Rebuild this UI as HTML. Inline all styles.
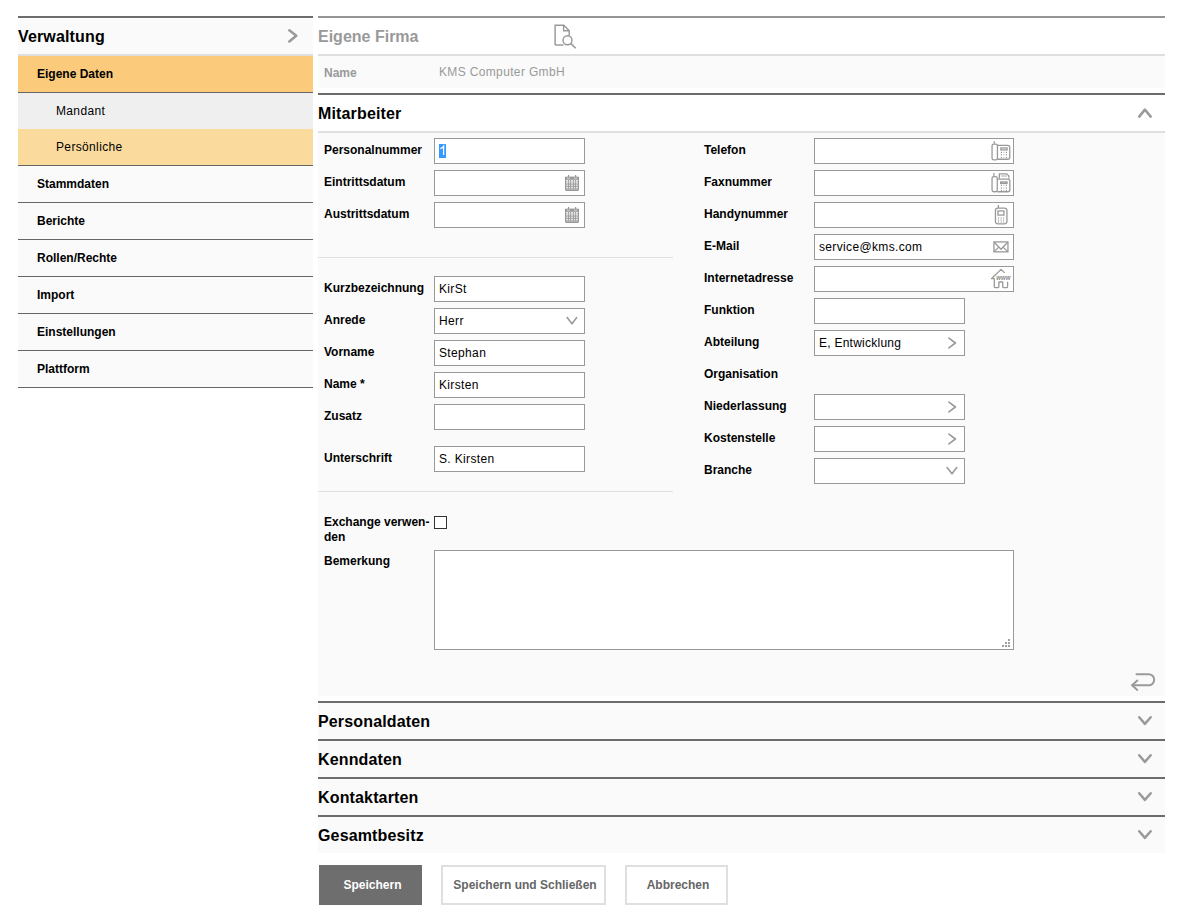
<!DOCTYPE html>
<html><head><meta charset="utf-8">
<style>
*{margin:0;padding:0;box-sizing:border-box}
html,body{width:1184px;height:917px;overflow:hidden;background:#fff}
body{font-family:"Liberation Sans",sans-serif;font-size:12px;color:#000;position:relative}
.a{position:absolute}
.t{position:absolute;white-space:nowrap;line-height:14px;letter-spacing:.35px}
.b{font-weight:bold;letter-spacing:0}
.h16{font-size:16px;font-weight:bold;line-height:18px;letter-spacing:.15px}
.sb{left:18px;width:295px}
.inp{position:absolute;background:#fff;border:1px solid #999;height:26px}
.inp span{position:absolute;left:4px;top:5px;line-height:14px;white-space:nowrap;letter-spacing:.35px}
</style></head><body>

<!-- SIDEBAR -->
<div class="a sb" style="top:16px;height:2px;background:#6c6c6c"></div>
<div class="a sb" style="top:19px;height:35px;background:#fafafa"></div>
<div class="t h16" style="left:18px;top:28px">Verwaltung</div>
<div class="a sb" style="top:54px;height:2px;background:#dfdfdf"></div>
<div class="a sb" style="top:56px;height:36px;background:#fbcb7b"></div>
<div class="a sb" style="top:92px;height:1px;background:#666"></div>
<div class="t b" style="left:37px;top:67px">Eigene Daten</div>
<div class="a sb" style="top:93px;height:36px;background:#efefef"></div>
<div class="t" style="left:56px;top:104px">Mandant</div>
<div class="a sb" style="top:129px;height:36px;background:#fbda9e"></div>
<div class="t" style="left:56px;top:140px">Persönliche</div>
<div class="a sb" style="top:165px;height:1px;background:#666"></div>

<div class="a sb" style="top:166px;height:36px;background:#fafafa"></div>
<div class="a sb" style="top:202px;height:1px;background:#666"></div>
<div class="t b" style="left:37px;top:177px">Stammdaten</div>
<div class="a sb" style="top:203px;height:36px;background:#fafafa"></div>
<div class="a sb" style="top:239px;height:1px;background:#666"></div>
<div class="t b" style="left:37px;top:214px">Berichte</div>
<div class="a sb" style="top:240px;height:36px;background:#fafafa"></div>
<div class="a sb" style="top:276px;height:1px;background:#666"></div>
<div class="t b" style="left:37px;top:251px">Rollen/Rechte</div>
<div class="a sb" style="top:277px;height:36px;background:#fafafa"></div>
<div class="a sb" style="top:313px;height:1px;background:#666"></div>
<div class="t b" style="left:37px;top:288px">Import</div>
<div class="a sb" style="top:314px;height:36px;background:#fafafa"></div>
<div class="a sb" style="top:350px;height:1px;background:#666"></div>
<div class="t b" style="left:37px;top:325px">Einstellungen</div>
<div class="a sb" style="top:351px;height:36px;background:#fafafa"></div>
<div class="a sb" style="top:387px;height:1px;background:#666"></div>
<div class="t b" style="left:37px;top:362px">Plattform</div>

<!-- MAIN -->
<div class="a" style="left:318px;top:16px;width:847px;height:2px;background:#959595"></div>
<div class="t h16" style="left:318px;top:28px;color:#999;letter-spacing:0">Eigene Firma</div>
<div class="a" style="left:318px;top:54px;width:847px;height:2px;background:#dfdfdf"></div>
<div class="a" style="left:318px;top:56px;width:847px;height:32px;background:#fafafa"></div>
<div class="t b" style="left:324px;top:66px;color:#999">Name</div>
<div class="t" style="left:439px;top:65px;color:#999">KMS Computer GmbH</div>
<div class="a" style="left:318px;top:93px;width:847px;height:2px;background:#6c6c6c"></div>
<div class="t h16" style="left:318px;top:105px">Mitarbeiter</div>
<div class="a" style="left:318px;top:131px;width:847px;height:2px;background:#dfdfdf"></div>
<div class="a" style="left:318px;top:133px;width:847px;height:563px;background:#fafafa"></div>

<div class="t b" style="left:324px;top:143px">Personalnummer</div>
<div class="inp" style="left:434px;top:138px;width:151px"><span><i style="background:#3399ff;color:transparent;font-style:normal;display:inline-block;height:14px">1</i></span></div>
<div class="t b" style="left:324px;top:175px">Eintrittsdatum</div>
<div class="inp" style="left:434px;top:170px;width:151px"></div>
<div class="t b" style="left:324px;top:207px">Austrittsdatum</div>
<div class="inp" style="left:434px;top:202px;width:151px"></div>
<div class="t b" style="left:324px;top:281px">Kurzbezeichnung</div>
<div class="inp" style="left:434px;top:276px;width:151px"><span>KirSt</span></div>
<div class="t b" style="left:324px;top:313px">Anrede</div>
<div class="inp" style="left:434px;top:308px;width:151px"><span>Herr</span></div>
<div class="t b" style="left:324px;top:345px">Vorname</div>
<div class="inp" style="left:434px;top:340px;width:151px"><span>Stephan</span></div>
<div class="t b" style="left:324px;top:377px">Name *</div>
<div class="inp" style="left:434px;top:372px;width:151px"><span>Kirsten</span></div>
<div class="t b" style="left:324px;top:409px">Zusatz</div>
<div class="inp" style="left:434px;top:404px;width:151px"></div>
<div class="t b" style="left:324px;top:451px">Unterschrift</div>
<div class="inp" style="left:434px;top:446px;width:151px"><span>S. Kirsten</span></div>
<div class="t b" style="left:704px;top:143px">Telefon</div>
<div class="inp" style="left:814px;top:138px;width:200px"></div>
<div class="t b" style="left:704px;top:175px">Faxnummer</div>
<div class="inp" style="left:814px;top:170px;width:200px"></div>
<div class="t b" style="left:704px;top:207px">Handynummer</div>
<div class="inp" style="left:814px;top:202px;width:200px"></div>
<div class="t b" style="left:704px;top:239px">E-Mail</div>
<div class="inp" style="left:814px;top:234px;width:200px"><span>service@kms.com</span></div>
<div class="t b" style="left:704px;top:271px">Internetadresse</div>
<div class="inp" style="left:814px;top:266px;width:200px"></div>
<div class="t b" style="left:704px;top:303px">Funktion</div>
<div class="inp" style="left:814px;top:298px;width:151px"></div>
<div class="t b" style="left:704px;top:335px">Abteilung</div>
<div class="inp" style="left:814px;top:330px;width:151px"><span style="letter-spacing:.25px">E, Entwicklung</span></div>
<div class="t b" style="left:704px;top:367px">Organisation</div>
<div class="t b" style="left:704px;top:399px">Niederlassung</div>
<div class="inp" style="left:814px;top:394px;width:151px"></div>
<div class="t b" style="left:704px;top:431px">Kostenstelle</div>
<div class="inp" style="left:814px;top:426px;width:151px"></div>
<div class="t b" style="left:704px;top:463px">Branche</div>
<div class="inp" style="left:814px;top:458px;width:151px"></div>
<div class="a" style="left:318px;top:257px;width:355px;height:1px;background:#dfdfdf"></div>
<div class="a" style="left:318px;top:491px;width:355px;height:1px;background:#dfdfdf"></div>
<div class="t b" style="left:324px;top:515px">Exchange verwen-</div>
<div class="t b" style="left:324px;top:530px">den</div>
<div class="a" style="left:434px;top:516px;width:13px;height:13px;border:1px solid #333;background:#fff"></div>
<div class="t b" style="left:324px;top:554px">Bemerkung</div>
<div class="a" style="left:434px;top:550px;width:580px;height:100px;border:1px solid #999;background:#fff"></div>
<div class="a" style="left:318px;top:701px;width:847px;height:2px;background:#6c6c6c"></div>
<div class="a" style="left:318px;top:703px;width:847px;height:36px;background:#fafafa"></div>
<div class="t h16" style="left:318px;top:713px">Personaldaten</div>
<div class="a" style="left:318px;top:739px;width:847px;height:2px;background:#6c6c6c"></div>
<div class="a" style="left:318px;top:741px;width:847px;height:36px;background:#fafafa"></div>
<div class="t h16" style="left:318px;top:751px">Kenndaten</div>
<div class="a" style="left:318px;top:777px;width:847px;height:2px;background:#6c6c6c"></div>
<div class="a" style="left:318px;top:779px;width:847px;height:36px;background:#fafafa"></div>
<div class="t h16" style="left:318px;top:789px">Kontaktarten</div>
<div class="a" style="left:318px;top:815px;width:847px;height:2px;background:#6c6c6c"></div>
<div class="a" style="left:318px;top:817px;width:847px;height:36px;background:#fafafa"></div>
<div class="t h16" style="left:318px;top:827px">Gesamtbesitz</div>
<div class="a" style="left:319px;top:865px;width:103px;height:40px;background:#6e6e6e;color:#fff;font-weight:bold;text-align:center;line-height:14px;padding-top:13px;padding-left:4px">Speichern</div>
<div class="a" style="left:441px;top:865px;width:165px;height:40px;border:2px solid #dfdfdf;color:#666;font-weight:bold;text-align:center;line-height:14px;padding-top:11px;padding-left:3px">Speichern und Schließen</div>
<div class="a" style="left:625px;top:865px;width:103px;height:40px;border:2px solid #dfdfdf;color:#666;font-weight:bold;text-align:center;line-height:14px;padding-top:11px;padding-left:3px">Abbrechen</div>

<svg class="a" style="left:0;top:0" width="1184" height="917" viewBox="0 0 1184 917">
<g fill="none" stroke="#9a9a9a" stroke-linecap="round" stroke-linejoin="round">
<path d="M289.3 30.2 L296.3 35.8 L289.3 41.5" stroke-width="2.5"/>
<path d="M1139.2 116.6 L1144.9 109.6 L1150.7 116.6" stroke-width="2.5"/>
<path d="M1139.2 717.2 L1144.9 723.9 L1150.7 717.2" stroke-width="2.5"/>
<path d="M1139.2 755.2 L1144.9 761.9 L1150.7 755.2" stroke-width="2.5"/>
<path d="M1139.2 793.2 L1144.9 799.9 L1150.7 793.2" stroke-width="2.5"/>
<path d="M1139.2 831.2 L1144.9 837.9 L1150.7 831.2" stroke-width="2.5"/>
<path d="M567.1 317.6 L572 323.8 L576.7 317.6" stroke-width="1.6"/>
<path d="M947.1 467.6 L952 473.8 L956.7 467.6" stroke-width="1.6"/>
<path d="M948.9 338.1 L955.4 343 L948.9 347.9" stroke-width="1.6"/>
<path d="M948.9 402.1 L955.4 407 L948.9 411.9" stroke-width="1.6"/>
<path d="M948.9 434.1 L955.4 439 L948.9 443.9" stroke-width="1.6"/>
<path d="M1136.5 674.2 H1148.65 A5.55 5.55 0 0 1 1148.65 685.3 H1132.5" stroke-width="2"/>
<path d="M1137.3 680.6 L1132 685.3 L1137.3 689.9" stroke-width="2"/>
</g>
<g fill="none" stroke="#999" stroke-width="1.3" stroke-linejoin="miter">
<path d="M555.1 45 V25.3 H563.8 L569.2 30.7 V35.8" stroke-width="1.45"/><path d="M563.6 25.3 V30.8 H569.2" stroke-width="1.4"/><path d="M555.1 45 H563.5" stroke-width="1.45"/>
<circle cx="567.5" cy="40.3" r="4.5" stroke-width="1.4"/><path d="M570.9 43.6 L575.2 47.8" stroke-width="1.6" stroke-linecap="round"/>
</g>
<g transform="translate(565 175)">
<rect x="1" y="4.6" width="12" height="9.2" fill="#ececec"/>
<rect x="0.6" y="2.4" width="12.8" height="13" rx="1.2" fill="none" stroke="#999" stroke-width="1.2"/>
<rect x="0" y="1.8" width="14" height="3" fill="#999"/>
<rect x="2" y="2.6" width="3" height="1" fill="#ddd"/><rect x="9" y="2.6" width="3" height="1" fill="#ddd"/>
<rect x="3" y="0" width="1.2" height="2.5" fill="#999"/><rect x="10" y="0" width="1.2" height="2.5" fill="#999"/>
<g stroke="#999" stroke-width="0.9">
<path d="M3.5 4.7 V13.6"/>
<path d="M5.5 4.7 V13.6"/>
<path d="M8.4 4.7 V13.6"/>
<path d="M10.4 4.7 V13.6"/>
<path d="M1 7 H13" stroke="#c4c4c4"/><path d="M1 9.1 H13"/>
<path d="M1 11.4 H13"/>
</g>
<rect x="0.5" y="13.4" width="13" height="2.2" fill="#999"/><path d="M1.5 14.4 H12.5" stroke="#c8c8c8" stroke-width="0.6"/>
</g>
<g transform="translate(565 207)">
<rect x="1" y="4.6" width="12" height="9.2" fill="#ececec"/>
<rect x="0.6" y="2.4" width="12.8" height="13" rx="1.2" fill="none" stroke="#999" stroke-width="1.2"/>
<rect x="0" y="1.8" width="14" height="3" fill="#999"/>
<rect x="2" y="2.6" width="3" height="1" fill="#ddd"/><rect x="9" y="2.6" width="3" height="1" fill="#ddd"/>
<rect x="3" y="0" width="1.2" height="2.5" fill="#999"/><rect x="10" y="0" width="1.2" height="2.5" fill="#999"/>
<g stroke="#999" stroke-width="0.9">
<path d="M3.5 4.7 V13.6"/>
<path d="M5.5 4.7 V13.6"/>
<path d="M8.4 4.7 V13.6"/>
<path d="M10.4 4.7 V13.6"/>
<path d="M1 7 H13" stroke="#c4c4c4"/><path d="M1 9.1 H13"/>
<path d="M1 11.4 H13"/>
</g>
<rect x="0.5" y="13.4" width="13" height="2.2" fill="#999"/><path d="M1.5 14.4 H12.5" stroke="#c8c8c8" stroke-width="0.6"/>
</g>
<g fill="none" stroke="#999" stroke-width="1.3">
<rect x="992.05" y="144.15" width="5.4" height="15.8" rx="1.8"/>
<path d="M997.45 145.35 H1007.75 Q1009.75 145.35 1009.75 147.35 V157.25 Q1009.75 159.25 1007.75 159.25 H997.45"/>
<rect x="1000.85" y="147.95" width="6.2" height="2"/>
</g>
<rect x="993.6" y="141.1" width="1.2" height="2.6" fill="#999"/>
<g fill="#999">
<rect x="1000.8" y="151.8" width="1.2" height="1.2" opacity="1"/>
<rect x="1000.8" y="154.1" width="1.2" height="1.2" opacity="1"/>
<rect x="1000.8" y="156.9" width="1.2" height="1.2" opacity="1"/>
<rect x="1003.1999999999999" y="151.8" width="1.2" height="1.2" opacity="0.5"/>
<rect x="1003.1999999999999" y="154.1" width="1.2" height="1.2" opacity="0.5"/>
<rect x="1003.1999999999999" y="156.9" width="1.2" height="1.2" opacity="0.5"/>
<rect x="1005.8" y="151.8" width="1.2" height="1.2" opacity="1"/>
<rect x="1005.8" y="154.1" width="1.2" height="1.2" opacity="1"/>
<rect x="1005.8" y="156.9" width="1.2" height="1.2" opacity="1"/>
</g>
<g fill="none" stroke="#999" stroke-width="1.3">
<rect x="992.05" y="176.55" width="5.2" height="15.2" rx="1.8"/>
<path d="M999.35 178.5 V173.85 H1006.8 L1008.85 175.9 V178.5"/>
<path d="M997.25 179.15 H1007.85 Q1009.85 179.15 1009.85 181.15 V189.75 Q1009.85 191.75 1007.85 191.75 H997.25"/>
<rect x="1000.65" y="181.95" width="6.4" height="1.5"/>
</g>
<rect x="993.3" y="173" width="1.2" height="3" fill="#999"/><rect x="1001" y="175.4" width="6" height="1.2" fill="#bbb"/>
<g fill="#999">
<rect x="1000.8" y="184.7" width="1.2" height="1.2" opacity="1"/>
<rect x="1000.8" y="187.4" width="1.2" height="1.2" opacity="1"/>
<rect x="1000.8" y="189.8" width="1.2" height="1.2" opacity="1"/>
<rect x="1003.1999999999999" y="184.7" width="1.2" height="1.2" opacity="0.5"/>
<rect x="1003.1999999999999" y="187.4" width="1.2" height="1.2" opacity="0.5"/>
<rect x="1003.1999999999999" y="189.8" width="1.2" height="1.2" opacity="0.5"/>
<rect x="1005.8" y="184.7" width="1.2" height="1.2" opacity="1"/>
<rect x="1005.8" y="187.4" width="1.2" height="1.2" opacity="1"/>
<rect x="1005.8" y="189.8" width="1.2" height="1.2" opacity="1"/>
</g>
<g fill="none" stroke="#999" stroke-width="1.3">
<rect x="995.45" y="208.05" width="11.5" height="15.8" rx="2.5"/>
<rect x="997.95" y="210.95" width="6" height="4.1"/>
<path d="M998.4 205 V208"/>
</g>
<g stroke="#c4c4c4" stroke-width="1"><path d="M998.6 217 V223"/><path d="M1001.1 217 V223"/><path d="M1003.6 217 V223"/></g>
<g fill="none" stroke="#999" stroke-width="1.3">
<rect x="993.95" y="241.95" width="14" height="9.9"/>
<path d="M993.95 241.95 L1001 249.3 L1007.95 241.95"/>
<path d="M994.2 251.6 L998.8 247.1"/><path d="M1007.7 251.6 L1003.1 247.1"/>
</g>
<g fill="none" stroke="#999" stroke-width="1.3" stroke-linejoin="round">
<path d="M1004.6 272.9 L1001 269.4 L991.5 278.7 H994.3 V286.4 Q994.3 287.6 995.5 287.6 H997.7 Q998.9 287.6 998.9 286.4 V282 H1002.7 V286.4 Q1002.7 287.6 1003.9 287.6 H1006.4 Q1007.6 287.6 1007.6 286.4 V281.8"/>
</g>
<text x="996.3" y="280.2" font-family="Liberation Sans" font-size="6.5" font-weight="bold" font-style="italic" fill="#8a8a8a" textLength="14" lengthAdjust="spacingAndGlyphs">www</text>
<g fill="#a0a0a0">
<rect x="1008" y="639" width="2" height="2"/>
<rect x="1005" y="642" width="2" height="2"/>
<rect x="1008" y="642" width="2" height="2"/>
<rect x="1002" y="645" width="2" height="2"/>
<rect x="1005" y="645" width="2" height="2"/>
<rect x="1008" y="645" width="2" height="2"/>
</g>
<path d="M443.6 155 V146.3 Q442.5 148 440.3 148.7" stroke="#fff" stroke-width="1.3" fill="none"/>
</svg>
</body></html>
